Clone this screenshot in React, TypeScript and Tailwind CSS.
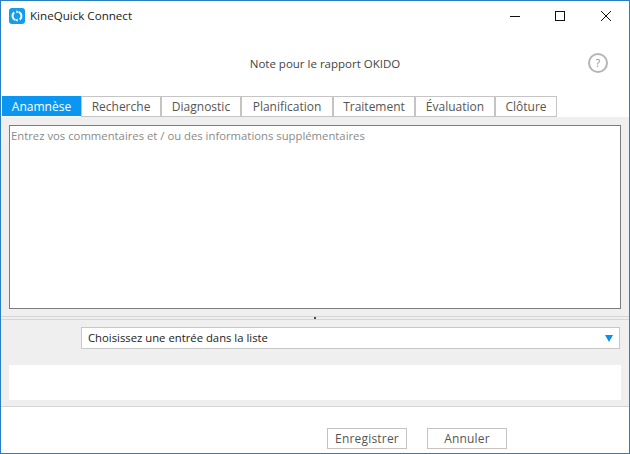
const tabs = ['Recherche', 'Diagnostic', 'Planification', 'Traitement', 'Évaluation', 'Clôture']
const tabWidths = ['w-[80px]', 'w-[80px]', 'w-[92px]', 'w-[82px]', 'w-[80px]', 'w-[62px]']

function AppLogo() {
  return (
    <svg width="16" height="16" viewBox="0 0 16 16" className="shrink-0">
      <rect width="16" height="16" rx="3" fill="#149eea" />
      <path d="M9.6 3.9A4.5 4.5 0 0 1 10.8 11.6M6.4 12.1A4.5 4.5 0 0 1 5.2 4.4" fill="none" stroke="#fff" strokeWidth="2" />
      <path d="M7.4 2.2v3.2l2.2-1.6zM8.6 13.8v-3.2l-2.2 1.6z" fill="#fff" />
    </svg>
  )
}

function WindowButtons() {
  return (
    <div className="ml-auto flex items-center mr-[18px] gap-[35px]">
      <svg width="10" height="10" viewBox="0 0 10 10">
        <path d="M0 5.5h10" stroke="#111" strokeWidth="1" />
      </svg>
      <svg width="10" height="10" viewBox="0 0 10 10">
        <rect x="0.5" y="0.5" width="9" height="9" fill="none" stroke="#111" strokeWidth="1" />
      </svg>
      <svg width="10" height="10" viewBox="0 0 10 10" className="ml-[1px]">
        <path d="M0 0l10 10M10 0L0 10" stroke="#111" strokeWidth="1" />
      </svg>
    </div>
  )
}

export default function App() {
  return (
    <div className="w-[630px] h-[454px] flex flex-col bg-white border border-[#2a7fc1] font-['Open_Sans','Noto_Sans',sans-serif] overflow-hidden">
      <div className="h-[29px] flex items-center shrink-0">
        <div className="ml-[8px] mr-[5px]">
          <AppLogo />
        </div>
        <span className="text-[11.6px] text-[#1a1a1a]">KineQuick Connect</span>
        <WindowButtons />
      </div>

      <div className="h-[66px] relative flex items-center justify-center shrink-0 pl-[20px]">
        <span className="text-[11.5px] text-[#444] mt-[1px]">Note pour le rapport OKIDO</span>
        <div className="absolute right-[21px] top-[23px] w-[20px] h-[20px] rounded-full border-2 border-[#b5b5b5] flex items-center justify-center text-[10px] text-[#888]">
          ?
        </div>
      </div>

      <div className="flex shrink-0 h-[21px] pl-[1px]">
        <div className="w-[79px] h-[20px] bg-[#0b96f2] text-white text-[12px] flex items-center justify-center pt-[1px]">
          Anamnèse
        </div>
        {tabs.map((t, i) => (
          <div
            key={t}
            className={`${tabWidths[i]} h-[21px] border border-[#c4c4c4] bg-white text-[#555] text-[12px] flex items-center justify-center pt-[1px]`}
          >
            {t}
          </div>
        ))}
      </div>

      <div className="flex-1 flex flex-col bg-[#efefef] border-b border-[#d5d5d5] min-h-0">
        <div className="h-[8px] shrink-0" />
        <div className="mx-[8px] h-[184px] shrink-0 bg-white border border-[#7c7c7c] px-[1px] text-[11.3px] text-[#8a8a8a] leading-[20px]">
          Entrez vos commentaires et / ou des informations supplémentaires
        </div>
        <div className="h-[8px] shrink-0 border-b border-[#d5d5d5]" />
        <div className="relative h-[2px] shrink-0">
          <div className="absolute left-[313px] top-0 w-[2px] h-[2px] bg-[#444]" />
        </div>
        <div className="h-[1px] shrink-0 bg-[#d5d5d5]" />
        <div className="h-[7px] shrink-0" />
        <div className="ml-[80px] mr-[9px] h-[22px] shrink-0 bg-white border border-[#c8c8c8] flex items-center justify-between pl-[6px] pr-[6px]">
          <span className="text-[11.3px] text-[#222]">Choisissez une entrée dans la liste</span>
          <span className="w-0 h-0 border-l-[4px] border-r-[4px] border-t-[7px] border-l-transparent border-r-transparent border-t-[#0f8fe6]" />
        </div>
        <div className="h-[16px] shrink-0" />
        <div className="mx-[8px] h-[35px] shrink-0 bg-white" />
      </div>

      <div className="h-[46px] shrink-0 flex items-start pl-[326px] gap-[20px] pt-[21px]">
        <button className="w-[80px] h-[21px] border border-[#c4c4c4] bg-white text-[12px] text-[#555] tracking-[0.2px] pt-[1px]">Enregistrer</button>
        <button className="w-[80px] h-[21px] border border-[#c4c4c4] bg-white text-[12px] text-[#555] tracking-[0.2px] pt-[1px]">Annuler</button>
      </div>
    </div>
  )
}
